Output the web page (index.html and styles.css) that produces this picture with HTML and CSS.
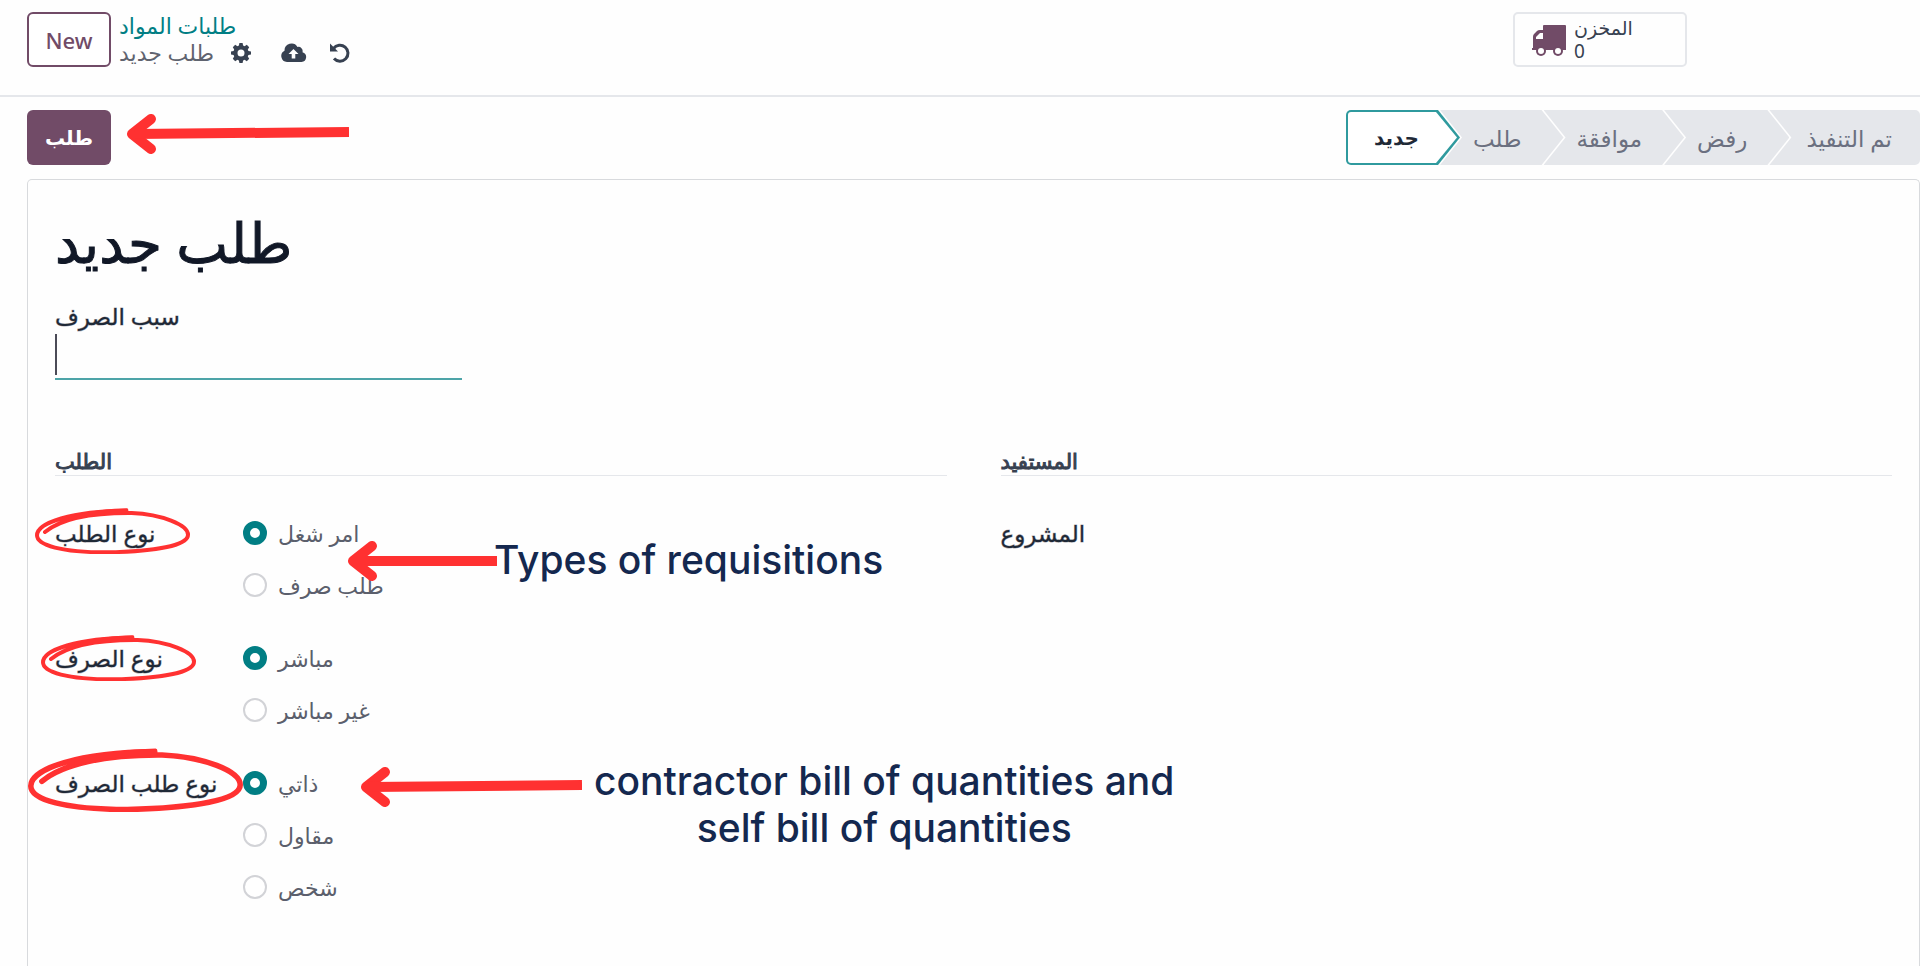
FILE: index.html
```html
<!DOCTYPE html>
<html lang="ar">
  <head>
    <meta charset="UTF-8" />
    <meta name="viewport" content="width=device-width, initial-scale=1.0" />
    <title>طلب جديد</title>
    <link rel="stylesheet" href="styles.css">
  </head>
  <body>
    <header class="control-panel">
      <button class="btn btn-outline">New</button>
      <div class="breadcrumb">
        <a href="#">طلبات المواد</a>
        <div class="breadcrumb-current">
          <span>طلب جديد</span>
          <button class="icon-btn" aria-label="Actions">
            <svg width="20" height="20" viewBox="0 0 20 20">
              <path fill-rule="evenodd" d="M8.4 0h3.2l.5 2.6 1.5.6L15.800 1.800l2.400 2.400-1.400 2.200.6 1.500 2.600.5v3.200l-2.600.5-.6 1.500 1.400 2.200-2.400 2.400-2.200-1.400-1.500.6-.5 2.600H8.400l-.5-2.600-1.500-.6-2.200 1.400-2.400-2.400 1.400-2.200-.6-1.500L0 11.600V8.400l2.600-.5.6-1.500L1.800 4.200l2.400-2.400 2.200 1.400 1.500-.6zM10 6.500a3.500 3.500 0 1 0 0 7 3.500 3.500 0 0 0 0-7z" />
            </svg>
          </button>
          <button class="icon-btn" aria-label="Save">
            <svg width="26" height="20" viewBox="0 0 26 20">
              <path fill-rule="evenodd" d="M6 19a6 6 0 0 1-2.500-11.300A7 7 0 0 1 16.500 4a4.200 4.200 0 0 1 5 5.200A5 5 0 0 1 20.500 19zM12.500 6 7.500 11h3.200v4.500h3.600V11h3.200z" />
            </svg>
          </button>
          <button class="icon-btn" aria-label="Discard">
            <svg width="22" height="22" viewBox="0 0 22 22">
              <path class="icon-line" d="M4.500 6.500A8 8 0 1 1 5 16.500" />
              <path d="M1 1.500v8h8z" />
            </svg>
          </button>
        </div>
      </div>
      <button class="stat-btn">
        <svg width="34" height="32" viewBox="0 0 34 32">
          <path fill-rule="evenodd" d="M12 1h21q1 0 1 1v24H0v-2h1V13q0-2 1-3l3-3q1-1 3-1h3V2q0-1 1-1zm-1 8H8l-4 4v2h7z" />
          <circle cx="9" cy="27" r="5" /><circle cx="26" cy="27" r="5" />
          <circle class="hub" cx="9" cy="27" r="3" /><circle class="hub" cx="26" cy="27" r="3" />
        </svg>
        <span class="stat-text"><span>المخزن</span><span>0</span></span>
      </button>
    </header>

    <div class="statusbar">
      <button class="btn btn-primary">طلب</button>
      <div class="stages">
        <button class="stage active"><span>جديد</span></button>
        <button class="stage">طلب</button>
        <button class="stage">موافقة</button>
        <button class="stage">رفض</button>
        <button class="stage">تم التنفيذ</button>
      </div>
    </div>

    <main class="sheet">
      <h1>طلب جديد</h1>
      <div class="reason">
        <label for="reason">سبب الصرف</label>
        <input type="text" id="reason" />
      </div>

      <div class="groups">
        <section>
          <h2>الطلب</h2>
          <div class="field" role="radiogroup" aria-labelledby="l-type">
            <span class="field-label" id="l-type">نوع الطلب</span>
            <div class="options">
              <label><input type="radio" name="type" checked />امر شغل</label>
              <label><input type="radio" name="type" />طلب صرف</label>
            </div>
          </div>
          <div class="field" role="radiogroup" aria-labelledby="l-issue">
            <span class="field-label" id="l-issue">نوع الصرف</span>
            <div class="options">
              <label><input type="radio" name="issue" checked />مباشر</label>
              <label><input type="radio" name="issue" />غير مباشر</label>
            </div>
          </div>
          <div class="field" role="radiogroup" aria-labelledby="l-request">
            <span class="field-label" id="l-request">نوع طلب الصرف</span>
            <div class="options">
              <label><input type="radio" name="request" checked />ذاتي</label>
              <label><input type="radio" name="request" />مقاول</label>
              <label><input type="radio" name="request" />شخص</label>
            </div>
          </div>
        </section>
        <section>
          <h2>المستفيد</h2>
          <div class="field">
            <span class="field-label">المشروع</span>
          </div>
        </section>
      </div>
    </main>

    <!-- Annotations -->
    <svg class="mark arrow-submit" width="222" height="40" viewBox="0 0 222 40">
      <path d="M24 5 5 20l19 15" /><path class="shaft" d="M8 20 222 18" />
    </svg>
    <svg class="mark arrow-types" width="149" height="40" viewBox="0 0 149 40">
      <path d="M24 5 5 20l19 15" /><path class="shaft" d="M8 20H149" />
    </svg>
    <svg class="mark arrow-boq" width="221" height="40" viewBox="0 0 221 40">
      <path d="M24 5 5 20l19 15" /><path class="shaft" d="M8 20 221 18" />
    </svg>

    <svg class="mark circle circle-type" viewBox="0 0 465 138">
      <g id="scribble">
        <path d="M30 72C75 35 165 14 290 15 380 19 459 50 459 80c0 32-99 50-244 53C80 133 6 112 6 82 6 45 110 9 273 8" />
        <path class="fill" d="M100 30C160 8 215 3 276 1q4 0 4 6v10Q180 16 100 38z" />
      </g>
    </svg>
    <svg class="mark circle circle-issue" viewBox="0 0 465 138"><use href="#scribble" /></svg>
    <svg class="mark circle circle-request" viewBox="0 0 465 138"><use href="#scribble" /></svg>

    <p class="note note-types" lang="en">Types of requisitions</p>
    <p class="note note-boq" lang="en">contractor bill of quantities and<br />self bill of quantities</p>
  </body>
</html>
```
FILE: styles.css
```css
* {
  box-sizing: border-box;
}
body {
  position: relative;
  margin: 0;
  min-height: 100vh;
  display: flex;
  flex-direction: column;
  overflow-x: hidden;
  background-color: #fefefe;
  color: #374151;
  font-family: "Noto Sans", "DejaVu Sans", sans-serif;
  font-size: 22px;
  line-height: 28px;
}
button,
input {
  font: inherit;
  color: inherit;
}
button {
  padding: 0;
  border: none;
  background: none;
  cursor: pointer;
}

/* Top bar */
.control-panel {
  display: flex;
  align-items: flex-start;
  height: 97px;
  padding: 12px 27px 0;
  border-bottom: 2px solid #e5e7eb;
}
.btn {
  width: 84px;
  height: 55px;
  border-radius: 6px;
  font-weight: 500;
}
.btn-outline {
  border: 2px solid #714b67;
  background-color: #fff;
  color: #714b67;
}
.btn-primary {
  background-color: #714b67;
  color: #fff;
  font-size: 20px;
  font-weight: 700;
}
.breadcrumb {
  margin-left: 8px;
  line-height: 27px;
}
.breadcrumb a {
  display: block;
  color: #017e84;
  text-decoration: none;
}
.breadcrumb-current {
  display: flex;
  align-items: center;
  color: #5f636f;
}
.icon-btn {
  display: flex;
  margin-left: 17px;
}
.icon-btn + .icon-btn {
  margin-left: 30px;
}
.icon-btn:last-child {
  margin-left: 22px !important;
}
.icon-btn svg {
  fill: #374151;
}
.icon-btn .icon-line {
  fill: none;
  stroke: #374151;
  stroke-width: 3;
}
.stat-btn {
  display: flex;
  align-items: center;
  gap: 8px;
  width: 174px;
  height: 55px;
  margin-left: auto;
  margin-right: 206px;
  padding: 0 17px;
  border: 2px solid #e5e7eb;
  border-radius: 5px;
  font-size: 19px;
  line-height: 23px;
}
.stat-btn svg {
  fill: #714b67;
}
.stat-btn .hub {
  fill: #fff;
}
.stat-text {
  display: flex;
  flex-direction: column;
  align-items: flex-start;
}

/* Status bar */
.statusbar {
  display: flex;
  justify-content: space-between;
  padding: 13px 0 14px 27px;
}
.stages {
  display: flex;
}
.stage {
  height: 55px;
  margin-left: -20px;
  padding: 0 42px 0 33px;
  background-color: #e5e7eb;
  color: #6b7080;
  font-size: 23px;
  clip-path: polygon(0 0, calc(100% - 22px) 0, 100% 50%, calc(100% - 22px) 100%, 0 100%, 22px 50%);
}
.stage:last-child {
  padding: 0 28px 0 37px;
  border-radius: 0 5px 5px 0;
  clip-path: polygon(0 0, 100% 0, 100% 100%, 0 100%, 22px 50%);
}
.stage.active {
  position: relative;
  margin-left: 0;
  padding: 0 41px 0 28px;
  border-radius: 5px 0 0 5px;
  background-color: #2f9a9e;
  color: #1f2937;
  font-size: 20px;
  font-weight: 700;
  clip-path: polygon(0 0, calc(100% - 22px) 0, 100% 50%, calc(100% - 22px) 100%, 0 100%);
}
.stage.active::before {
  content: "";
  position: absolute;
  inset: 2px 3px 2px 2px;
  border-radius: 3px 0 0 3px;
  background-color: #fff;
  clip-path: polygon(0 0, calc(100% - 21px) 0, 100% 50%, calc(100% - 21px) 100%, 0 100%);
}
.stage.active span {
  position: relative;
}

/* Form sheet */
.sheet {
  flex: 1;
  margin-left: 27px;
  padding: 24px 27px 40px;
  border: 1px solid #d8dadd;
  border-bottom: none;
  border-radius: 5px 5px 0 0;
}
h1 {
  margin: 0 0 22px;
  color: #111827;
  font-size: 55px;
  font-weight: 500;
  line-height: 76px;
  -webkit-text-stroke: 1px #111827;
}
.reason {
  display: flex;
  flex-direction: column;
  width: 407px;
}
.reason label,
.field-label {
  color: #1f2937;
  font-size: 23px;
  -webkit-text-stroke: 1px rgba(31, 41, 55, 0.4);
}
.reason input {
  height: 50px;
  padding: 0 4px;
  border: none;
  border-bottom: 2px solid #4da4a8;
  outline: none;
  /* text caret */
  background: linear-gradient(#4b4b57, #4b4b57) 0 4px / 2px 41px no-repeat;
}
.groups {
  display: grid;
  grid-template-columns: 1fr 1fr;
  gap: 54px;
  margin-top: 67px;
}
h2 {
  margin: 0 0 43px;
  border-bottom: 1px solid #e5e7eb;
  color: #374151;
  font-size: 21px;
  font-weight: 400;
  line-height: 28px;
  -webkit-text-stroke: 1px #374151;
}
.field {
  display: grid;
  grid-template-columns: 188px 1fr;
  margin-bottom: 45px;
}
.options {
  display: flex;
  flex-direction: column;
  gap: 24px;
}
.options label {
  display: flex;
  align-items: center;
  gap: 11px;
  color: #5b5f6c;
}
.options input {
  appearance: none;
  width: 24px;
  height: 24px;
  margin: 0;
  border: 2px solid #d2d3d7;
  border-radius: 50%;
  background-color: #fff;
}
.options input:checked {
  border: 7px solid #017e84;
}

/* Annotations */
.mark,
.note {
  position: absolute;
  pointer-events: none;
}
.mark path {
  fill: none;
  stroke: #ff3131;
  stroke-width: 10;
  stroke-linecap: round;
  stroke-linejoin: round;
}
.mark .shaft {
  stroke-linecap: butt;
}
.mark .fill {
  fill: #ff3131;
  stroke: none;
}
.arrow-submit {
  left: 127px;
  top: 114px;
}
.arrow-types {
  left: 348px;
  top: 541px;
}
.arrow-boq {
  left: 361px;
  top: 767px;
}
.circle {
  width: 155px;
}
.circle path {
  stroke-width: 12;
}
.circle-type {
  left: 35px;
  top: 508px;
}
.circle-issue {
  left: 41px;
  top: 635px;
}
.circle-request {
  left: 28px;
  top: 748px;
  width: 215px;
}
.note {
  margin: 0;
  color: #14284f;
  font-family: Inter, sans-serif;
  font-size: 39px;
  font-weight: 500;
  line-height: 47px;
  text-align: center;
  white-space: nowrap;
}
.note-types {
  left: 494px;
  top: 536px;
}
.note-boq {
  left: 594px;
  top: 757px;
}
```
